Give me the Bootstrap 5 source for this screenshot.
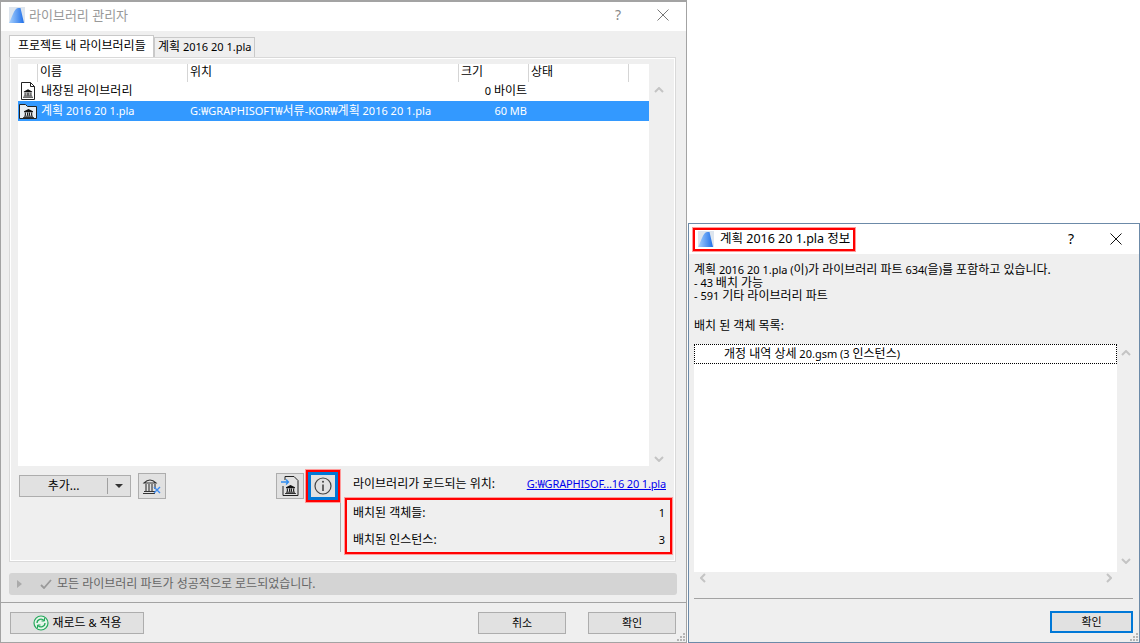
<!DOCTYPE html>
<html lang="ko">
<head>
<meta charset="UTF-8">
<title>라이브러리 관리자</title>
<link rel="stylesheet" href="https://cdn.jsdelivr.net/npm/bootstrap@5.3.0/dist/css/bootstrap.min.css">
<style>
body { background: #fff; margin: 0; overflow: hidden; font: 11px/14px "Noto Sans", "Noto Sans CJK KR", sans-serif; color: #000; }
.ko { font-size: 12px; }
.desk { position: relative; width: 1140px; height: 643px; }
.win { position: absolute; background: #efefef; display: flex; flex-direction: column; }
.win-main { left: 0; top: 0; width: 687px; height: 643px; border: 1px solid #a3a3a3; border-top-width: 2px; }
.win-info { left: 688px; top: 223px; width: 452px; height: 420px; border: 1px solid #6c8aa8; }
.title-bar { background: #fff; display: flex; align-items: center; flex-shrink: 0; }
.win-main .title-bar { height: 29px; padding: 0 0 3px 8px; color: #999; font-size: 13px; }
.win-info .title-bar { height: 30px; padding-left: 3px; font-size: 12.500px; }
.title-mark { border: 2px solid #f00; box-shadow: 0 0 0 1px #ff9a9a; margin-left: 1px; height: 23px; display: flex; align-items: center; gap: 6px; padding: 0 3px 0 3px; }
.win-ctrl { margin-left: auto; display: flex; align-items: center; gap: 36px; padding-right: 17px; font-size: 14px; }
.pane-tabs { margin: 4px 0 0 8px; border: 0; height: 22px; flex-shrink: 0; align-items: flex-end; }
.pane-tab { background: #efefef; border: 1px solid #c9c9c9; border-bottom: 0; height: 20px; padding: 2px 3px; white-space: nowrap; }
.pane-tab.on { background: #fff; height: 22px; padding: 3px 8px; width: 145px; }
.tab-panel { margin-left: 8px; width: 667px; height: 505px; border: 2px solid #fff; outline: 1px solid #d9d9d9; outline-offset: -1px; padding: 5px 3px 0 7px; flex-shrink: 0; }
.file-area { display: flex; height: 402px; }
.file-list { width: 631px; background: #fff; }
.head-row { display: flex; height: 18px; margin-bottom: -1px; }
.head-row div { border-right: 1px solid #d5d5d5; padding: 0 2px; line-height: 16px; height: 18px; }
.file-row { display: flex; height: 20px; align-items: center; white-space: nowrap; }
.file-row.sel { background: #3399ff; color: #fff; }
.c-icon { width: 20px; padding-left: 3px; display: flex; }
.c-name { width: 150px; padding-left: 3px; }
.c-path { width: 271px; padding-left: 2px; }
.c-size { width: 70px; padding-right: 2px; text-align: right; }
.scroll-col { width: 20px; display: flex; flex-direction: column; justify-content: space-between; align-items: center; padding: 23px 0 4px; }
.lower { display: flex; height: 89px; }
.tool-side { width: 326px; border-right: 1px solid #ababab; height: 82px; margin-top: 4px; padding: 3px 0 0 1px; display: flex; align-items: flex-start; }
.gray-btn { background: #e1e1e1; border: 1px solid #adadad; border-radius: 0; height: 22px; padding: 0; font-size: 11px; color: #000; display: inline-flex; align-items: center; justify-content: center; }
.gray-btn:hover { background: #e1e1e1; border-color: #adadad; }
.add-btn { width: 112px; margin-top: 2px; }
.add-btn .lbl { flex: 1; text-align: center; }
.add-btn .car { width: 23px; height: 16px; border-left: 1px solid #a0a0a0; display: flex; align-items: center; justify-content: center; }
.add-btn .car i { border: 4px solid transparent; border-top: 4px solid #333; border-bottom: 0; }
.ico-btn { width: 28px; height: 26px; margin-top: 0; }
.ico-del { margin-left: 7px; }
.ico-imp { margin-left: 110px; }
.info-hl { border: 2px solid #f00; box-shadow: 0 0 0 1px #ff9a9a; padding: 0; margin: -3px 0 0 2px; background: #fff; }
.info-btn { width: 30px; height: 28px; border: 3px solid #0078d7; background: #e1e1e1; display: flex; align-items: center; justify-content: center; }
.stat-side { flex: 1; padding: 11px 0 0 3px; }
.load-row { display: flex; justify-content: space-between; padding: 0 6px 0 9px; height: 20px; }
.load-row a { color: #00e; letter-spacing: -.15px; }
.stat-box { border: 2px solid #f00; box-shadow: 0 0 0 1px #ff9a9a; height: 56px; width: 327px; padding: 0 5px 0 6px; margin: 1px 0 0 1px; }
.stat-box div { display: flex; justify-content: space-between; height: 27px; align-items: center; position: relative; top: -1px; }
.status-strip { margin: 11px 0 0 8px; width: 668px; height: 22px; background: #d4d4d4; border-radius: 3px; display: flex; align-items: center; color: #666; flex-shrink: 0; padding-left: 8px; }
.status-strip .tri { border: 4px solid transparent; border-left: 5px solid #aaa; border-right: 0; margin-right: 18px; }
.status-strip svg { margin-right: 5px; }
.foot-line { border-top: 1px solid #a3a3a3; margin-top: 7px; flex-shrink: 0; }
.foot-row { display: flex; padding: 9px 10px 0 9px; }
.foot-row .gray-btn { width: 88px; }
.foot-row .reload-btn { width: 134px; }
.foot-row .ok-main { margin-left: 22px; }
.grip { position: absolute; right: 1px; bottom: 1px; display: block; }
.info-body { padding: 9px 5px 0; flex: 1; display: flex; flex-direction: column; }
.info-text { line-height: 13px; margin: 0; height: 81px; }
.info-text .list-cap { display: block; margin-top: 17px; }
.part-area { display: flex; height: 228px; }
.part-list { width: 423px; background: #fff; }
.part-row { height: 20px; border: 1px dotted #000; padding-left: 29px; line-height: 17px; }
.part-scroll { width: 17px; display: flex; flex-direction: column; justify-content: space-between; align-items: center; padding: 6px 0 8px; }
.h-scroll { display: flex; justify-content: space-between; padding: 1px 22px 0 6px; height: 13px; }
.info-line { border-top: 1px solid #a3a3a3; width: 439px; margin-top: 13px; }
.info-foot { display: flex; justify-content: flex-end; padding-top: 12px; width: 439px; }
.ok-btn { width: 83px; height: 22px; border: 2px solid #0078d7; }
.ok-btn:hover { border-color: #0078d7; }
</style>
</head>
<body>
<svg width="0" height="0" class="d-block">
  <defs>
    <linearGradient id="markFill" x1="0" y1="0" x2="1" y2="0"><stop offset="0" stop-color="#a9d2ff"/><stop offset="1" stop-color="#1f6fe8"/></linearGradient>
    <symbol id="mark" viewBox="0 0 16 16"><rect width="16" height="16" fill="#dde5ee"/><path d="M0 16C3 11 5 1 9 1h2.500L15 16z" fill="url(#markFill)"/></symbol>
    <symbol id="temple" viewBox="0 0 12 10"><path d="M6 0 1 2.500v1h10v-1z" fill="currentColor"/><path d="M2.500 4v3.500M5 4v3.500M7 4v3.500M9.500 4v3.500" stroke="currentColor" stroke-width="1.200"/><path d="M1 8h10M0 9.500h12" stroke="currentColor"/></symbol>
    <symbol id="chev-up" viewBox="0 0 10 6"><path d="M1 5l4-4 4 4" fill="none" stroke="#c4c4c4" stroke-width="2"/></symbol>
    <symbol id="chev-down" viewBox="0 0 10 6"><path d="M1 1l4 4 4-4" fill="none" stroke="#c4c4c4" stroke-width="2"/></symbol>
    <symbol id="chev-left" viewBox="0 0 6 10"><path d="M5 1 1 5l4 4" fill="none" stroke="#c4c4c4" stroke-width="2"/></symbol>
    <symbol id="chev-right" viewBox="0 0 6 10"><path d="M1 1l4 4-4 4" fill="none" stroke="#c4c4c4" stroke-width="2"/></symbol>
    <symbol id="resize-dots" viewBox="0 0 8 8"><path d="M6 0h2v2H6zM3 3h2v2H3zM6 3h2v2H6zM0 6h2v2H0zM3 6h2v2H3zM6 6h2v2H6z" fill="#b5b5b5"/></symbol>
  </defs>
</svg>
<div class="desk">
  <div class="win win-main">
    <div class="title-bar">
      <svg width="16" height="16"><use href="#mark"/></svg>
      <span class="ms-1">라이브러리 관리자</span>
      <div class="win-ctrl" style="color:#888">
        <span>?</span>
        <svg width="12" height="12"><path d="M.5.500l11 11M11.500.500l-11 11" stroke="#777"/></svg>
      </div>
    </div>
    <ul class="nav pane-tabs">
      <li class="pane-tab on ko">프로젝트 내 라이브러리들</li>
      <li class="pane-tab"><span class="ko">계획</span> 2016 20 1.pla</li>
    </ul>
    <div class="tab-panel">
      <div class="file-area">
        <div class="file-list">
          <div class="head-row ko">
            <div style="width:20px"></div><div style="width:150px">이름</div><div style="width:271px">위치</div><div style="width:70px">크기</div><div style="width:100px">상태</div><div style="width:20px;border:0"></div>
          </div>
          <div class="file-row">
            <span class="c-icon"><svg width="14" height="18" viewBox="0 0 14 18"><path d="M.5.500h9l4 4v13H.500z" fill="#fff" stroke="#222"/><path d="M9.500.500v4h4" fill="none" stroke="#222"/><use href="#temple" x="2" y="7" width="10" height="9" color="#111"/></svg></span>
            <span class="c-name ko">내장된 라이브러리</span><span class="c-path"></span><span class="c-size">0 <span class="ko">바이트</span></span>
          </div>
          <div class="file-row sel">
            <span class="c-icon" style="padding-left:1px"><svg width="18" height="16" viewBox="0 0 18 16"><path d="M.5 1.500h6l2 2h9v12H.500z" fill="#e8edf2" stroke="#222"/><use href="#temple" x="4" y="6" width="11" height="9" color="#111"/></svg></span>
            <span class="c-name"><span class="ko">계획</span> 2016 20 1.pla</span><span class="c-path">G:₩GRAPHISOFT₩<span class="ko">서류</span>-KOR₩<span class="ko">계획</span> 2016 20 1.pla</span><span class="c-size">60 MB</span>
          </div>
        </div>
        <div class="scroll-col">
          <svg width="10" height="6"><use href="#chev-up"/></svg>
          <svg width="10" height="6"><use href="#chev-down"/></svg>
        </div>
      </div>
      <div class="lower">
        <div class="tool-side">
          <button class="btn gray-btn add-btn"><span class="lbl ko">추가...</span><span class="car"><i></i></span></button>
          <button class="btn gray-btn ico-btn ico-del"><svg width="20" height="18" viewBox="0 0 20 18"><path d="M2 6Q8 0 14 6zM4 7v7M7 7v7M10 7v7M13 7v5" fill="none" stroke="#333" stroke-width="1.100"/><path d="M2 14.500h12M1 16.500h12" stroke="#333"/><path d="M12 10l6 6M18 10l-6 6" stroke="#3d8bf0" stroke-width="1.400"/></svg></button>
          <button class="btn gray-btn ico-btn ico-imp"><svg width="18" height="20" viewBox="0 0 18 20"><path d="M4 4V.500h9l4 4v15H2V10" fill="none" stroke="#222"/><path d="M0 6h7M5 3.500 7.500 6 5 8.500" fill="none" stroke="#2f8cf0" stroke-width="1.300"/><use href="#temple" x="4" y="9" width="11" height="9" color="#111"/></svg></button>
          <div class="info-hl"><button class="btn p-0 rounded-0 info-btn"><svg width="18" height="18" viewBox="0 0 18 18"><circle cx="9" cy="9" r="8" fill="none" stroke="#444" stroke-width="1.200"/><path d="M9 7.500V14" stroke="#444" stroke-width="1.600"/><circle cx="9" cy="4.800" r="1" fill="#444"/></svg></button></div>
        </div>
        <div class="stat-side">
          <div class="load-row"><span class="ko">라이브러리가 로드되는 위치:</span><a href="#">G:₩GRAPHISOF...16 20 1.pla</a></div>
          <div class="stat-box">
            <div><span class="ko">배치된 객체들:</span><span>1</span></div>
            <div><span class="ko">배치된 인스턴스:</span><span>3</span></div>
          </div>
        </div>
      </div>
    </div>
    <div class="status-strip">
      <span class="tri"></span>
      <svg width="12" height="10" viewBox="0 0 12 10"><path d="M1 6l3 3 7-8" fill="none" stroke="#999" stroke-width="1.800"/></svg>
      <span class="ko">모든 라이브러리 파트가 성공적으로 로드되었습니다.</span>
    </div>
    <div class="foot-line"></div>
    <div class="foot-row">
      <button class="btn gray-btn reload-btn gap-1"><svg width="16" height="16" viewBox="0 0 16 16"><circle cx="8" cy="8" r="7" fill="#e6f5ea" stroke="#25a85c" stroke-width="1.200"/><path d="M4 8a4 4 0 0 1 7-2.500M12 8a4 4 0 0 1-7 2.500" fill="none" stroke="#25a85c" stroke-width="1.300"/><path d="M11.500 3v3H8.500M4.500 13v-3h3" fill="none" stroke="#25a85c"/></svg><span><span class="ko">재로드</span> &amp; <span class="ko">적용</span></span></button>
      <button class="btn gray-btn ms-auto ko">취소</button>
      <button class="btn gray-btn ok-main ko">확인</button>
    </div>
    <svg class="grip" width="8" height="8"><use href="#resize-dots"/></svg>
  </div>

  <div class="win win-info">
    <div class="title-bar">
      <div class="title-mark">
        <svg width="16" height="16"><use href="#mark"/></svg>
        <span><span>계획</span> 2016 20 1.pla <span>정보</span></span>
      </div>
      <div class="win-ctrl">
        <span>?</span>
        <svg width="12" height="12"><path d="M.5.500l11 11M11.500.500l-11 11" stroke="#111"/></svg>
      </div>
    </div>
    <div class="info-body">
      <p class="info-text">
        <span class="ko">계획</span> 2016 20 1.pla (<span class="ko">이</span>)<span class="ko">가 라이브러리 파트</span> 634(<span class="ko">을</span>)<span class="ko">를 포함하고 있습니다.</span><br>
        - 43 <span class="ko">배치 가능</span><br>
        - 591 <span class="ko">기타 라이브러리 파트</span>
        <span class="list-cap ko">배치 된 객체 목록:</span>
      </p>
      <div class="part-area">
        <div class="part-list"><div class="part-row"><span class="ko">개정 내역 상세</span> 20.gsm (3 <span class="ko">인스턴스</span>)</div></div>
        <div class="part-scroll">
          <svg width="10" height="6"><use href="#chev-up"/></svg>
          <svg width="10" height="6"><use href="#chev-down"/></svg>
        </div>
      </div>
      <div class="h-scroll">
        <svg width="6" height="10"><use href="#chev-left"/></svg>
        <svg width="6" height="10"><use href="#chev-right"/></svg>
      </div>
      <div class="info-line"></div>
      <div class="info-foot"><button class="btn gray-btn ok-btn ko">확인</button></div>
    </div>
    <svg class="grip" width="8" height="8"><use href="#resize-dots"/></svg>
  </div>
</div>
<script src="https://cdn.jsdelivr.net/npm/bootstrap@5.3.0/dist/js/bootstrap.bundle.min.js"></script>
</body>
</html>
